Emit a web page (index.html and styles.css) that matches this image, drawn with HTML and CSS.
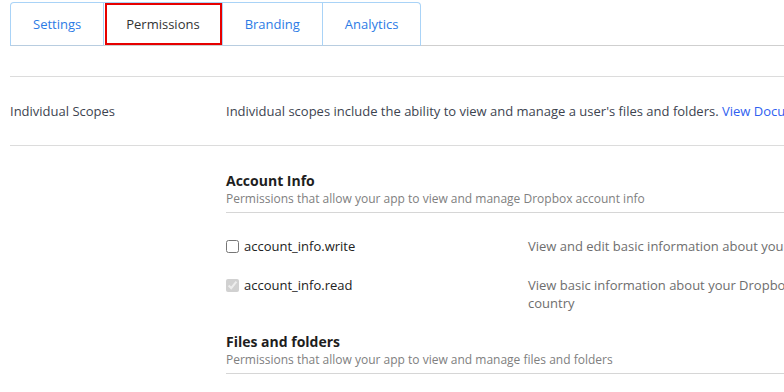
FILE: index.html
```html
<!DOCTYPE html>
<html lang="en">
<head>
    <meta charset="UTF-8">
    <meta name="viewport" content="width=device-width, initial-scale=1.0">
    <title>App Permissions</title>
    <link rel="stylesheet" href="styles.css">
</head>
<body>
<div class="page">
    <!-- App console tabs -->
    <div class="tab-bar">
        <div class="tabs">
            <a class="tab" href="#">Settings</a>
            <a class="tab active" href="#">Permissions</a>
            <a class="tab" href="#">Branding</a>
            <a class="tab" href="#">Analytics</a>
        </div>
    </div>

    <div class="scope-row">
        <div class="scope-label">Individual Scopes</div>
        <div class="scope-text">
            Individual scopes include the ability to view and manage a user's files and folders.
            <a href="#" class="link">View Documentation</a>
        </div>
    </div>

    <!-- Account info permissions -->
    <div class="section">
        <div class="section-title">Account Info</div>
        <div class="section-sub">Permissions that allow your app to view and manage Dropbox account info</div>

        <div class="perm-list">
            <div class="perm">
                <label class="perm-name">
                    <input type="checkbox">
                    <span>account_info.write</span>
                </label>
                <div class="perm-desc">View and edit basic information about your Dropbox account such as your profile photo</div>
            </div>
            <div class="perm">
                <label class="perm-name">
                    <input type="checkbox" checked disabled>
                    <span>account_info.read</span>
                </label>
                <div class="perm-desc">View basic information about your Dropbox account such as your username, email, and country</div>
            </div>
        </div>
    </div>

    <!-- Files and folders permissions -->
    <div class="section section-files">
        <div class="section-title">Files and folders</div>
        <div class="section-sub">Permissions that allow your app to view and manage files and folders</div>
    </div>
</div>
</body>
</html>
```

FILE: styles.css
```css
html, body {
    overflow: hidden;
}

body {
    font-family: "Open Sans", Arial, sans-serif;
    font-size: 13px;
    color: #3d4450;
    margin: 0;
    padding: 2px 0 0 10px;
    background-color: white;
}

.page {
    width: 1240px;
}

.tab-bar {
    border-bottom: 1px solid #cfcfcf;
}

.tabs {
    display: flex;
    margin-bottom: -1px;
}

.tab {
    display: block;
    height: 42px;
    line-height: 42px;
    padding: 0 22px;
    color: #2c7be5;
    text-decoration: none;
    border: 1px solid #a9d3f7;
    border-left: none;
    border-bottom-color: #b8cde0;
}

.tab:first-child {
    border-left: 1px solid #a9d3f7;
    border-top-left-radius: 4px;
}

.tab:last-child {
    border-top-right-radius: 4px;
}

.tab.active {
    color: #333;
    border-bottom-color: transparent;
    outline: 2px solid #e60000;
    outline-offset: -3px;
}

.scope-row {
    display: flex;
    margin-top: 30px;
    padding: 25px 0;
    border-top: 1px solid #dcdcdc;
    border-bottom: 1px solid #dcdcdc;
    line-height: 18px;
}

.scope-label {
    width: 216px;
    flex-shrink: 0;
}

.scope-text {
    white-space: nowrap;
}

.link {
    color: #2f5ff0;
    text-decoration: none;
}

.section {
    margin-left: 216px;
    margin-top: 25px;
}

.section-title {
    font-size: 14px;
    font-weight: bold;
    color: #1e1e1e;
    line-height: 19px;
}

.section-sub {
    font-size: 12px;
    color: #808080;
    line-height: 17px;
    padding-bottom: 5px;
    border-bottom: 1px solid #d6d6d6;
}

.perm-list {
    padding-top: 24px;
}

.perm {
    display: flex;
    line-height: 18px;
    margin-bottom: 21px;
}

.perm:last-child {
    margin-bottom: 0;
}

.perm-name {
    width: 302px;
    flex-shrink: 0;
    display: flex;
    align-items: center;
    align-self: flex-start;
    color: #222;
}

.perm-name input {
    margin: 0 5px 0 0;
    width: 13px;
    height: 13px;
}

.perm-desc {
    width: 560px;
    color: #6e6e6e;
}

.section-files {
    margin-top: 20px;
}
```
